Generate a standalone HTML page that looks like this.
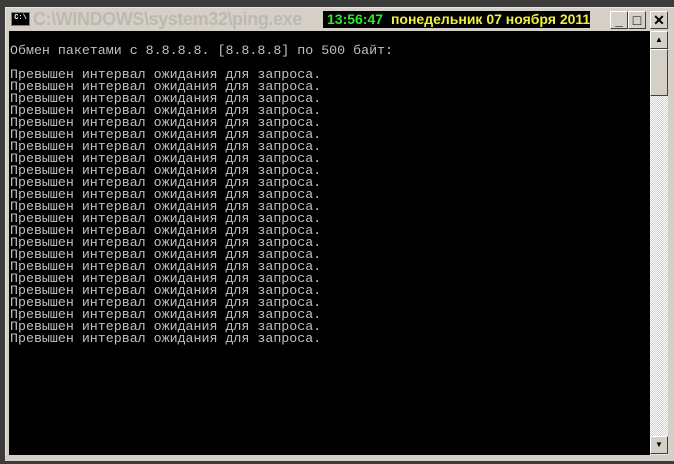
<!DOCTYPE html><html><head><meta charset="utf-8"><style>
body{margin:0;width:674px;height:464px;background:#3c3c3c;position:relative;overflow:hidden;font-family:"Liberation Sans",sans-serif}
.win{position:absolute;left:5px;top:7px;width:669px;height:453px;background:#d4d0c8;border-top:1px solid #e8e6e0;border-left:1px solid #e8e6e0}
.t{position:absolute;left:33px;top:9px;font-weight:bold;font-size:18px;color:#bdb9b1;letter-spacing:-0.4px}
.ico{position:absolute;left:11px;top:12px;width:17px;height:12px;background:#000;border:1px solid #808080;color:#fff;font:bold 7px "Liberation Mono",monospace;line-height:11px;text-align:center}
.clk{position:absolute;left:323px;top:11px;width:267px;height:17px;background:#000;font-weight:bold;font-size:14px;line-height:17px;white-space:nowrap}
.b{position:absolute;top:11px;width:16px;height:16px;background:#d4d0c8;border:1px solid;border-color:#fff #404040 #404040 #fff;font:bold 14px "Liberation Sans",sans-serif;text-align:center;line-height:16px;color:#000}
.con{position:absolute;left:9px;top:31px;width:641px;height:424px;background:#000}
pre{margin:0;position:absolute;left:10px;top:45px;font:13.3px/12px "Liberation Mono","DejaVu Sans Mono",monospace;color:#c0c0c0}
.sb{position:absolute;left:650px;top:31px;width:18px;height:424px;background:repeating-conic-gradient(#fff 0 25%,#d4d0c8 0 50%) 0 0/2px 2px}
.sbt{position:absolute;left:0;width:16px;background:#d4d0c8;border:1px solid;border-color:#fff #404040 #404040 #fff}
.bot{position:absolute;left:5px;top:455px;width:669px;height:5px;background:#d4d0c8}
</style></head><body>
<div class="win"></div>
<div class="ico">C:\</div>
<div class="t">C:\WINDOWS\system32\ping.exe</div>
<div class="clk"><span style="color:#2ee82e;margin-left:4px">13:56:47</span> <span style="color:#f0f040;margin-left:4px">понедельник 07 ноября 2011</span></div>
<div class="b" style="left:610px">_</div>
<div class="b" style="left:628px">□</div>
<div class="b" style="left:650px">✕</div>
<div class="con"></div>
<pre>Обмен пакетами с 8.8.8.8. [8.8.8.8] по 500 байт:

Превышен интервал ожидания для запроса.
Превышен интервал ожидания для запроса.
Превышен интервал ожидания для запроса.
Превышен интервал ожидания для запроса.
Превышен интервал ожидания для запроса.
Превышен интервал ожидания для запроса.
Превышен интервал ожидания для запроса.
Превышен интервал ожидания для запроса.
Превышен интервал ожидания для запроса.
Превышен интервал ожидания для запроса.
Превышен интервал ожидания для запроса.
Превышен интервал ожидания для запроса.
Превышен интервал ожидания для запроса.
Превышен интервал ожидания для запроса.
Превышен интервал ожидания для запроса.
Превышен интервал ожидания для запроса.
Превышен интервал ожидания для запроса.
Превышен интервал ожидания для запроса.
Превышен интервал ожидания для запроса.
Превышен интервал ожидания для запроса.
Превышен интервал ожидания для запроса.
Превышен интервал ожидания для запроса.
Превышен интервал ожидания для запроса.</pre>
<div class="sb">
<div class="sbt" style="top:0;height:16px;font-size:8px;text-align:center;line-height:16px">▲</div>
<div class="sbt" style="top:18px;height:45px"></div>
<div class="sbt" style="top:405px;height:16px;font-size:8px;text-align:center;line-height:16px">▼</div>
</div>
<div class="bot"></div>
</body></html>
